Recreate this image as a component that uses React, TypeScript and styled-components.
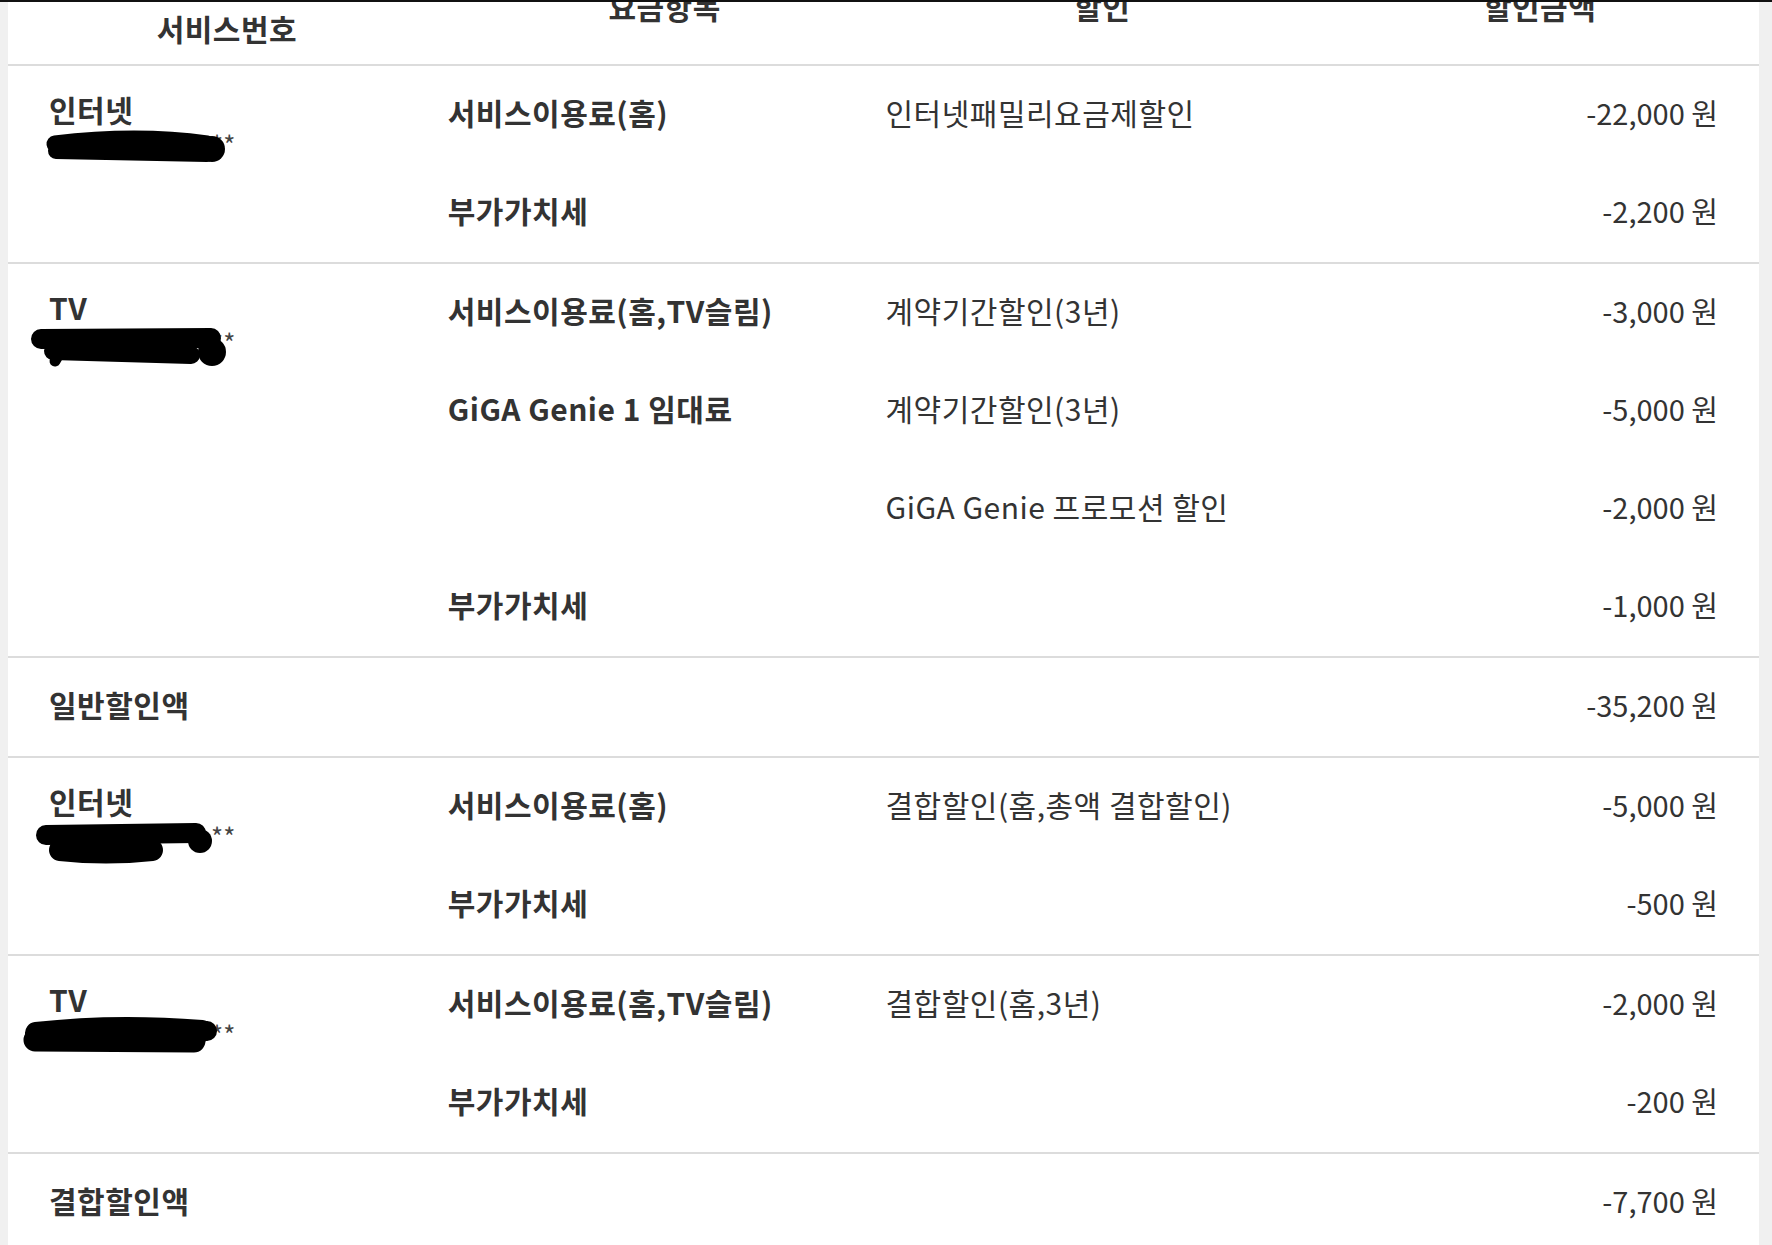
import styled, { createGlobalStyle } from 'styled-components'

const GlobalStyle = createGlobalStyle`
  html, body {
    margin: 0;
    padding: 0;
    height: 100%;
    overflow: hidden;
    background: #f0f0f0;
  }
  body {
    font-family: "Noto Sans CJK KR", "Noto Sans", sans-serif;
    color: #333;
  }
`

const TopBar = styled.div`
  height: 2px;
  background: #111;
`

const Sheet = styled.div`
  margin: 0 13px 0 8px;
  background: #fff;
`

const HeaderRow = styled.div`
  display: grid;
  grid-template-columns: repeat(4, 1fr);
  height: 62px;
  overflow: hidden;
  border-bottom: 2px solid #dcdcdc;
`

const HeadCell = styled.div<{ $raised?: boolean }>`
  text-align: center;
  font-size: 30px;
  font-weight: 700;
  letter-spacing: 0.5px;
  line-height: 40px;
  margin-top: ${(p) => (p.$raised ? '-16px' : '6px')};
`

const Group = styled.div`
  display: grid;
  grid-template-columns: repeat(4, 1fr);
  grid-auto-rows: 98px;
  border-bottom: 2px solid #dcdcdc;
`

const ServiceCell = styled.div<{ $span: number }>`
  grid-column: 1;
  grid-row: 1 / span ${(p) => p.$span};
  padding: 25px 0 0 41px;
`

const ServiceName = styled.div`
  font-size: 30px;
  font-weight: 700;
  letter-spacing: 0.5px;
  line-height: 36px;
`

const NumberLine = styled.div`
  position: relative;
  height: 34px;
`

const Stars = styled.span`
  display: block;
  margin-left: 162px;
  font-size: 26px;
  line-height: 34px;
  color: #444;
`

const Blob = styled.svg`
  position: absolute;
  overflow: visible;
`

const Cell = styled.div<{ $bold?: boolean; $right?: boolean; $first?: boolean }>`
  display: flex;
  align-items: center;
  justify-content: ${(p) => (p.$right ? 'flex-end' : 'flex-start')};
  padding: 0 ${(p) => (p.$right ? '41px' : '0')} 6px ${(p) => (p.$first ? '41px' : '2px')};
  font-size: ${(p) => (p.$right ? '29px' : '30px')};
  letter-spacing: ${(p) => (p.$right ? '0' : '0.5px')};
  line-height: 40px;
  font-weight: ${(p) => (p.$bold ? 700 : 400)};
  white-space: nowrap;
`

type Stroke = { d: string; w: number }
type Dot = { cx: number; cy: number; r: number }
type Redaction = { left: number; top: number; width: number; height: number; strokes: Stroke[]; dots: Dot[] }

type Item = { item: string; discount: string; amount: string }
type Section =
  | { kind: 'group'; name: string; redaction: Redaction; items: Item[] }
  | { kind: 'sum'; label: string; amount: string }

const sections: Section[] = [
  {
    kind: 'group',
    name: '인터넷',
    redaction: {
      left: -2,
      top: 5,
      width: 179,
      height: 30,
      strokes: [
        { d: 'M8,12 Q90,2 160,12', w: 17 },
        { d: 'M9,19 L160,22', w: 16 },
      ],
      dots: [{ cx: 165, cy: 17, r: 13 }],
    },
    items: [
      { item: '서비스이용료(홈)', discount: '인터넷패밀리요금제할인', amount: '-22,000' },
      { item: '부가가치세', discount: '', amount: '-2,200' },
    ],
  },
  {
    kind: 'group',
    name: 'TV',
    redaction: {
      left: -18,
      top: 3,
      width: 196,
      height: 38,
      strokes: [
        { d: 'M10,11 L180,10', w: 20 },
        { d: 'M22,23 L160,27', w: 18 },
        { d: 'M28,26 L24,33', w: 11 },
      ],
      dots: [{ cx: 181, cy: 24, r: 14 }],
    },
    items: [
      { item: '서비스이용료(홈,TV슬림)', discount: '계약기간할인(3년)', amount: '-3,000' },
      { item: 'GiGA Genie 1 임대료', discount: '계약기간할인(3년)', amount: '-5,000' },
      { item: '', discount: 'GiGA Genie 프로모션 할인', amount: '-2,000' },
      { item: '부가가치세', discount: '', amount: '-1,000' },
    ],
  },
  { kind: 'sum', label: '일반할인액', amount: '-35,200' },
  {
    kind: 'group',
    name: '인터넷',
    redaction: {
      left: -13,
      top: 4,
      width: 176,
      height: 39,
      strokes: [
        { d: 'M10,12 L160,10', w: 20 },
        { d: 'M24,27 Q70,32 116,27', w: 22 },
      ],
      dots: [{ cx: 164, cy: 18, r: 12 }],
    },
    items: [
      { item: '서비스이용료(홈)', discount: '결합할인(홈,총액 결합할인)', amount: '-5,000' },
      { item: '부가가치세', discount: '', amount: '-500' },
    ],
  },
  {
    kind: 'group',
    name: 'TV',
    redaction: {
      left: -25,
      top: 2,
      width: 192,
      height: 33,
      strokes: [
        { d: 'M12,14 Q90,5 178,12', w: 22 },
        { d: 'M11,21 L170,22', w: 23 },
      ],
      dots: [{ cx: 183, cy: 12, r: 10 }],
    },
    items: [
      { item: '서비스이용료(홈,TV슬림)', discount: '결합할인(홈,3년)', amount: '-2,000' },
      { item: '부가가치세', discount: '', amount: '-200' },
    ],
  },
  { kind: 'sum', label: '결합할인액', amount: '-7,700' },
]

const Marker = ({ r }: { r: Redaction }) => (
  <Blob
    width={r.width}
    height={r.height}
    viewBox={`0 0 ${r.width} ${r.height}`}
    style={{ left: r.left, top: r.top }}
  >
    {r.strokes.map((s, i) => (
      <path key={i} d={s.d} stroke="#000" strokeWidth={s.w} strokeLinecap="round" fill="none" />
    ))}
    {r.dots.map((d, i) => (
      <circle key={`d${i}`} cx={d.cx} cy={d.cy} r={d.r} fill="#000" />
    ))}
  </Blob>
)

const Won = ({ value }: { value: string }) => <>{value} 원</>

export default function App() {
  return (
    <>
      <GlobalStyle />
      <TopBar />
      <Sheet>
        <HeaderRow>
          <HeadCell>서비스번호</HeadCell>
          <HeadCell $raised>요금항목</HeadCell>
          <HeadCell $raised>할인</HeadCell>
          <HeadCell $raised>할인금액</HeadCell>
        </HeaderRow>
        {sections.map((s, i) =>
          s.kind === 'group' ? (
            <Group key={i}>
              <ServiceCell $span={s.items.length}>
                <ServiceName>{s.name}</ServiceName>
                <NumberLine>
                  <Stars>**</Stars>
                  <Marker r={s.redaction} />
                </NumberLine>
              </ServiceCell>
              {s.items.map((it, j) => [
                <Cell key={`${j}a`} $bold>{it.item}</Cell>,
                <Cell key={`${j}b`}>{it.discount}</Cell>,
                <Cell key={`${j}c`} $right>
                  <Won value={it.amount} />
                </Cell>,
              ])}
            </Group>
          ) : (
            <Group key={i}>
              <Cell $bold $first>{s.label}</Cell>
              <Cell />
              <Cell />
              <Cell $right>
                <Won value={s.amount} />
              </Cell>
            </Group>
          )
        )}
      </Sheet>
    </>
  )
}
